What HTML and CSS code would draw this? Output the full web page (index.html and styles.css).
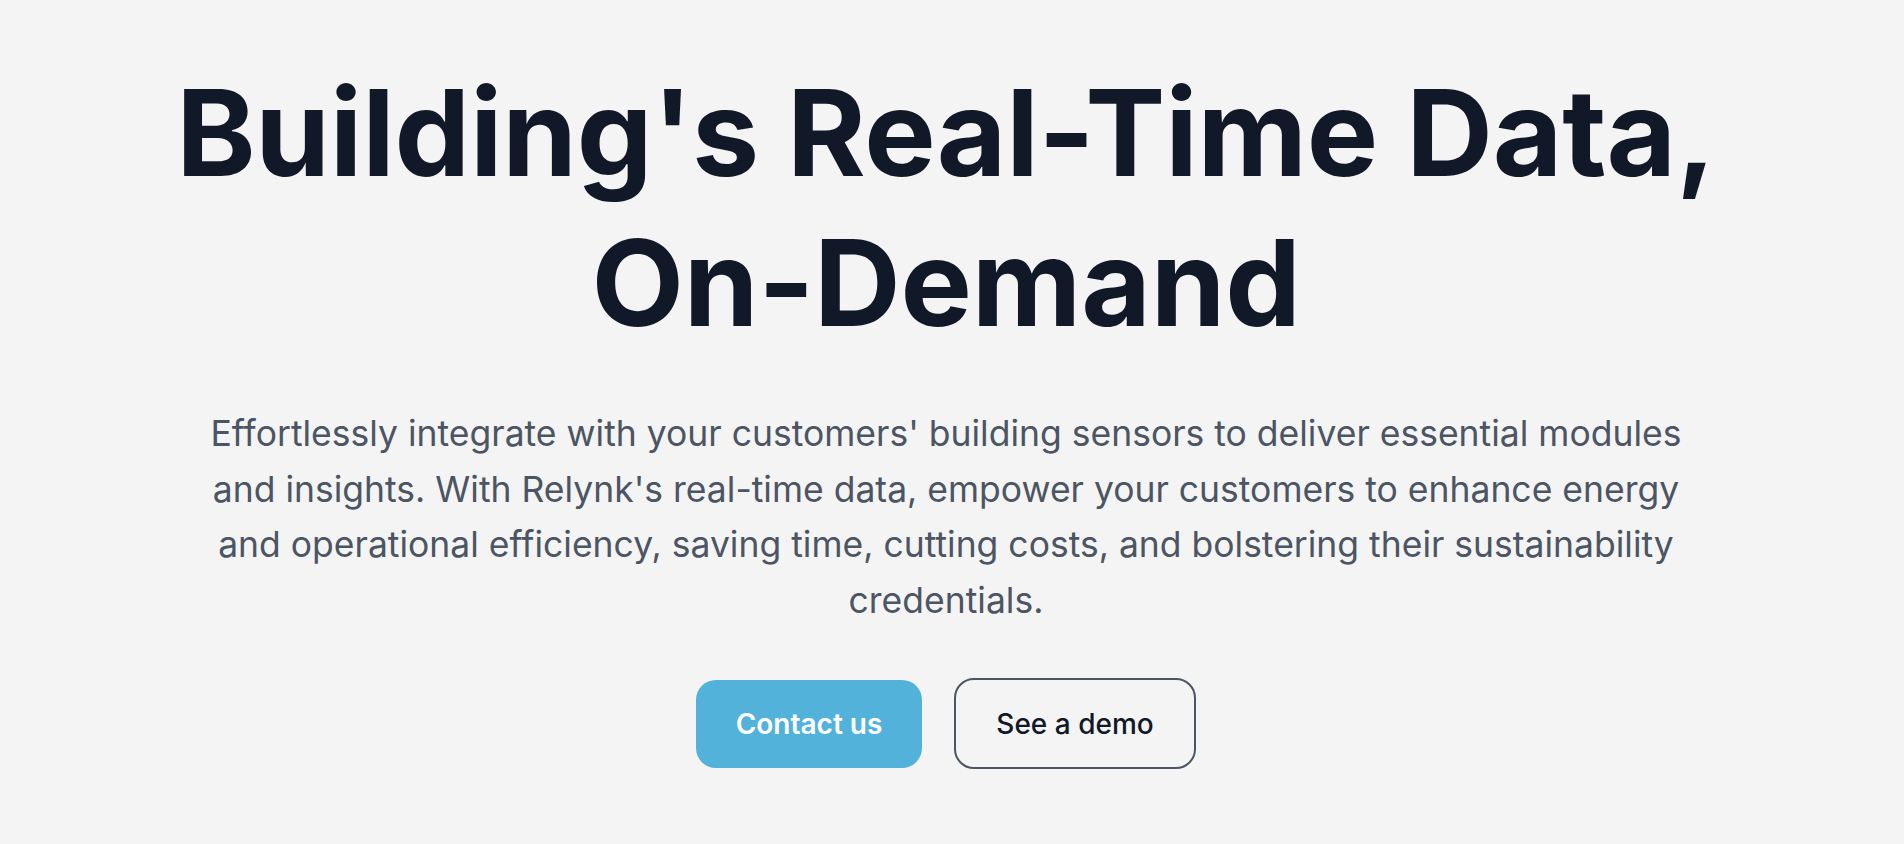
FILE: index.html
```html
<!DOCTYPE html>
<html lang="en">
<head>
<meta charset="utf-8">
<title>Relynk</title>
<link rel="stylesheet" href="styles.css">
</head>
<body>
<main class="hero">
  <h1 class="hero-title">Building's Real-Time Data, On-Demand</h1>
  <p class="hero-text">Effortlessly integrate with your customers' building sensors to deliver essential modules and insights. With Relynk's real-time data, empower your customers to enhance energy and operational efficiency, saving time, cutting costs, and bolstering their sustainability credentials.</p>
  <div class="hero-actions">
    <a class="btn btn-primary" href="#">Contact us</a>
    <a class="btn btn-outline" href="#">See a demo</a>
  </div>
</main>
</body>
</html>
```
FILE: styles.css
```css
html, body {
  margin: 0;
  padding: 0;
  background: #f4f4f4;
}
body {
  font-family: Inter, "Noto Sans", "Liberation Sans", sans-serif;
  color: #111827;
}
.hero {
  display: flex;
  flex-direction: column;
  align-items: center;
  padding: 58px 12px 0 0;
  text-align: center;
}
.hero-title {
  margin: 0;
  max-width: 1600px;
  font-size: 120px;
  line-height: 150px;
  font-weight: 700;
  letter-spacing: -0.2px;
  color: #111827;
}
.hero-text {
  margin: 48px 0 0;
  max-width: 1500px;
  font-size: 35.5px;
  line-height: 55.5px;
  font-weight: 400;
  color: #4b5563;
}
.hero-actions {
  display: flex;
  align-items: center;
  gap: 32px;
  margin-top: 50px;
}
.btn {
  display: flex;
  align-items: center;
  justify-content: center;
  box-sizing: border-box;
  font-size: 28px;
  font-weight: 600;
  text-decoration: none;
  border-radius: 20px;
}
.btn-primary {
  width: 226px;
  height: 88px;
  background: #52b2da;
  color: #ffffff;
}
.btn-outline {
  width: 242px;
  height: 91px;
  border: 2px solid #4b5563;
  color: #111827;
  font-weight: 500;
}
```
